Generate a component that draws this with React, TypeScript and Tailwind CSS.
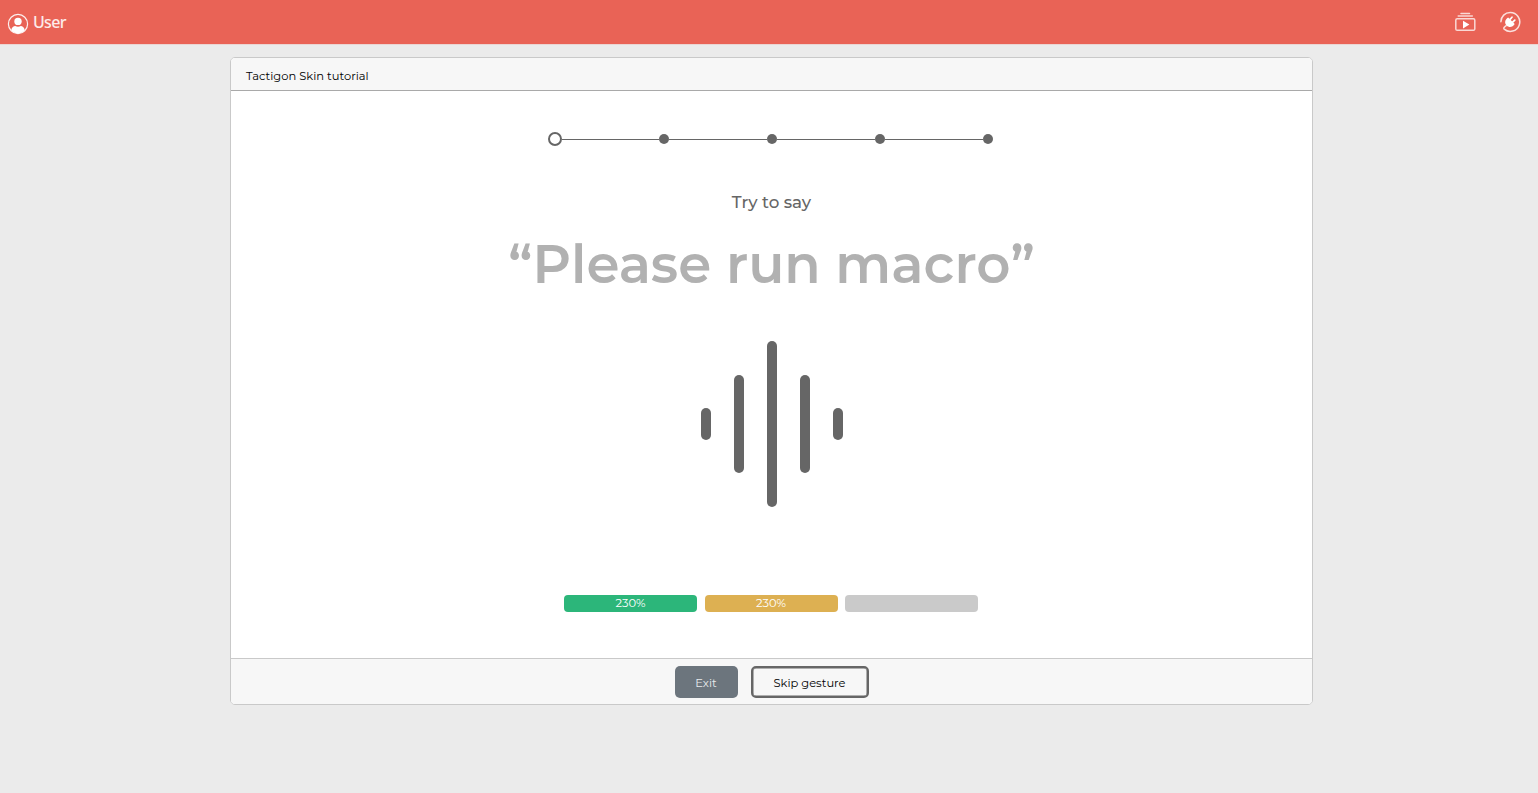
const bars = ["h-[32px]", "h-[98px]", "h-[166px]", "h-[98px]", "h-[32px]"];

function UserIcon() {
  return (
    <svg className="h-[22px] w-[22px]" viewBox="0 0 22 22" fill="none">
      <circle cx="11" cy="11" r="9.6" stroke="#fff" strokeOpacity=".9" strokeWidth="1.2" />
      <circle cx="11" cy="8.4" r="3.7" fill="#fff" />
      <path d="M4.2 17.2C4.8 14.3 6.6 13.4 8.2 13.1C9.9 14 12.1 14 13.8 13.1C15.4 13.4 17.2 14.3 17.8 17.2C14 21.3 8 21.3 4.2 17.2Z" fill="#fff" />
    </svg>
  );
}

function PlaylistIcon() {
  return (
    <svg className="h-[20px] w-[22px]" viewBox="0 0 22 20" fill="none" stroke="#fff" strokeOpacity=".75" strokeWidth="1.5" strokeLinecap="round">
      <path d="M7 1.4H15.5M4.2 4H18.3" />
      <rect x="1.8" y="6.8" width="19" height="11.5" rx="1.4" />
      <path d="M9 8.8V16.4L15.4 12.6Z" fill="#fff" stroke="none" />
    </svg>
  );
}

function PlugIcon() {
  return (
    <svg className="h-[22px] w-[22px]" viewBox="0 0 22 22" fill="none" stroke="#fff" strokeLinecap="round">
      <path d="M1.9 10.8C2 5.3 6.1 1.6 11.2 1.6A9.4 9.4 0 1 1 5.2 18.1C4.4 17.3 4.8 16.2 7.2 14.6" strokeOpacity=".8" strokeWidth="1.5" />
      <path d="M9.2 6.4L15.7 12.9C13.8 16.2 10.2 17 7.6 14.5C5.1 12 5.9 8.4 9.2 6.4Z" fill="#fff" stroke="none" />
      <path d="M10.8 8.6L13 6.2M13.4 11.4L15.8 9.1" strokeWidth="1.7" />
    </svg>
  );
}

function Steps() {
  return (
    <div className="mt-[41px] mr-px flex h-[14px] w-[445px] items-center">
      <span className="-ml-px h-[14px] w-[14px] shrink-0 rounded-full border-2 border-[#666]" />
      {["w-[97px]", "w-[98px]", "w-[98px]", "w-[98px]"].map((width, i) => (
        <span key={i} className="flex shrink-0 items-center">
          <span className={`${width} h-px bg-[#666]`} />
          <span className="h-[10px] w-[10px] rounded-full bg-[#666]" />
        </span>
      ))}
    </div>
  );
}

export default function App() {
  return (
    <div className="flex h-screen flex-col overflow-hidden bg-[#ebebeb] font-['Montserrat','Inter',sans-serif] text-[#212529]">
      <header className="flex h-[44px] shrink-0 items-center justify-between bg-[#e96356] pr-[17px] pl-[7px] shadow-[0_1px_0_#ebd5d3]">
        <div className="flex items-center gap-[4px] pt-[3px]">
          <UserIcon />
          <span className="-mt-[3px] font-['Noto_Sans',sans-serif] text-[16px] leading-[20px] font-medium tracking-[-0.7px] text-[#fdebe9]">User</span>
        </div>
        <div className="flex items-center gap-[23px]">
          <PlaylistIcon />
          <PlugIcon />
        </div>
      </header>

      <main className="mt-[13px] ml-[230px] flex h-[648px] w-[1083px] shrink-0 flex-col overflow-hidden rounded-[5px] border border-[#c9c9c9] bg-white">
        <div className="flex h-[33px] shrink-0 items-center border-b border-[#a9a9a9] bg-[#f7f7f7] pt-[5px] pl-[15px] text-[11.5px] text-black">
          Tactigon Skin tutorial
        </div>

        <section className="flex flex-1 flex-col items-center">
          <Steps />
          <p className="mt-[44px] text-[16.7px] leading-[24px] font-medium text-[#666]">Try to say</p>
          <h1 className="mt-[17px] text-[53.1px] leading-[66px] font-semibold whitespace-nowrap text-[#b1b1b1]">“Please run macro”</h1>
          <div className="mt-[44px] flex h-[166px] items-center gap-[23px]">
            {bars.map((height, i) => (
              <span key={i} className={`${height} w-[10px] rounded-full bg-[#666]`} />
            ))}
          </div>
          <div className="mt-[88px] mr-px flex gap-[7.5px] text-[11.5px] leading-[17px] text-white">
            <div className="h-[17px] w-[133px] rounded-[4px] bg-[#2cb67a] text-center">230%</div>
            <div className="h-[17px] w-[133px] rounded-[4px] bg-[#ddb052] text-center">230%</div>
            <div className="h-[17px] w-[133px] rounded-[4px] bg-[#cacaca]" />
          </div>
        </section>

        <footer className="flex h-[46px] shrink-0 items-center justify-center gap-[13px] border-t border-[#c9c9c9] bg-[#f7f7f7] pt-[1px] text-[11.5px]">
          <button className="h-[32px] w-[63px] rounded-[5px] bg-[#6c757d] pt-[3px] text-[#e9ebed]">Exit</button>
          <button className="h-[32px] w-[118px] rounded-[5px] border-[2.5px] border-[#666] pt-[3px] text-black shadow-[inset_0_0_0_0.5px_#666]">Skip gesture</button>
        </footer>
      </main>
    </div>
  );
}
